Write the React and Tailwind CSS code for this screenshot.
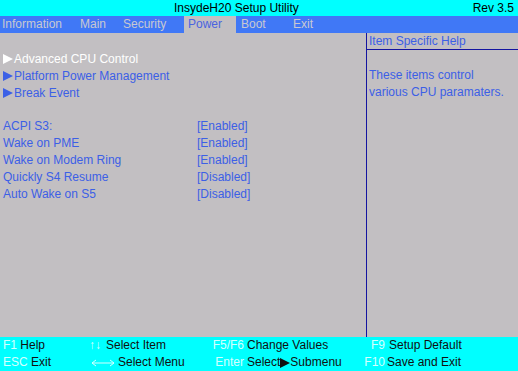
import React from "react";

const Tri = ({ color, className = "" }) => (
  <svg width="10" height="10" viewBox="0 0 10 10" className={"inline-block " + className}>
    <polygon points="0,0 10,5 0,10" fill={color} />
  </svg>
);

export default function App() {
  const font = { fontFamily: '"Liberation Sans", Arial, sans-serif' };
  const items = [
    ["ACPI S3:", "[Enabled]"],
    ["Wake on PME", "[Enabled]"],
    ["Wake on Modem Ring", "[Enabled]"],
    ["Quickly S4 Resume", "[Disabled]"],
    ["Auto Wake on S5", "[Disabled]"],
  ];
  return (
    <div className="w-[518px] h-[371px] flex flex-col bg-[#c2bfc2] text-[12px] leading-[17px] overflow-hidden" style={font}>
      {/* title bar */}
      <div className="h-[16px] bg-[#00ffff] flex items-center text-black leading-[16px]">
        <div className="flex-1 pl-[174px]">InsydeH20 Setup Utility</div>
        <div className="pr-[4px]">Rev 3.5</div>
      </div>
      {/* menu bar */}
      <div className="h-[17px] bg-[#4078f6] flex text-[#c8c8d0] leading-[17px]">
        <div className="w-[76px] pl-[2px]">Information</div>
        <div className="w-[43px] pl-[4px]">Main</div>
        <div className="w-[65px] pl-[4px]">Security</div>
        <div className="w-[52px] pl-[4px] bg-[#c2bfc2] text-[#4a64e0]">Power</div>
        <div className="w-[53px] pl-[5px]">Boot</div>
        <div className="pl-[4px]">Exit</div>
      </div>
      {/* body */}
      <div className="flex-1 flex">
        <div className="w-[366px] pt-[17px] pl-[3px]">
          <div className="h-[17px] flex items-center text-white pt-[1px]">
            <Tri color="#ffffff" className="mr-[1px]" />
            <span>Advanced CPU Control</span>
          </div>
          <div className="h-[17px] flex items-center text-[#3c60e6] pt-[1px]">
            <Tri color="#3c60e6" className="mr-[1px]" />
            <span>Platform Power Management</span>
          </div>
          <div className="h-[17px] flex items-center text-[#3c60e6] pt-[1px]">
            <Tri color="#3c60e6" className="mr-[1px]" />
            <span>Break Event</span>
          </div>
          <div className="h-[17px]" />
          {items.map(([k, v]) => (
            <div key={k} className="h-[17px] flex text-[#3c60e6]">
              <div className="w-[194px]">{k}</div>
              <div>{v}</div>
            </div>
          ))}
        </div>
        <div className="w-[1px] bg-[#1414a0]" />
        <div className="flex-1 text-[#3c60e6]">
          <div className="h-[17px] border-b border-[#1414a0] pl-[2px] leading-[17px]">Item Specific Help</div>
          <div className="h-[17px]" />
          <div className="pl-[2px]">
            <div>These items control</div>
            <div>various CPU paramaters.</div>
          </div>
        </div>
      </div>
      {/* footer */}
      <div className="h-[34px] bg-[#00ffff] text-[#101010] leading-[17px]">
        <div className="h-[17px] flex">
          <div className="w-[89px] pl-[3px]">
            <span className="text-[#d4ffff]">F1</span> Help
          </div>
          <div className="w-[111px] flex items-center">
            <span className="text-[#d4ffff] mr-[5px]">↑↓</span>
            <span>Select Item</span>
          </div>
          <div className="w-[44px] text-right text-[#d4ffff]">F5/F6</div>
          <div className="w-[102px] pl-[3px]">Change Values</div>
          <div className="w-[39px] text-right text-[#d4ffff]">F9</div>
          <div className="pl-[4px]">Setup Default</div>
        </div>
        <div className="h-[17px] flex">
          <div className="w-[89px] pl-[3px]">
            <span className="text-[#d4ffff]">ESC</span> Exit
          </div>
          <div className="w-[111px] flex items-center">
            <svg width="24" height="8" viewBox="0 0 24 8" className="ml-[2px] mr-[3px]">
              <path d="M1 4 H23 M1 4 L5 1 M1 4 L5 7 M23 4 L19 1 M23 4 L19 7" stroke="#d4ffff" strokeWidth="1" fill="none" />
            </svg>
            <span>Select Menu</span>
          </div>
          <div className="w-[44px] text-right text-[#d4ffff]">Enter</div>
          <div className="w-[102px] pl-[3px] flex items-center">
            <span>Select</span>
            <Tri color="#101010" />
            <span>Submenu</span>
          </div>
          <div className="w-[39px] text-right text-[#d4ffff]">F10</div>
          <div className="pl-[2px]">Save and Exit</div>
        </div>
      </div>
    </div>
  );
}
